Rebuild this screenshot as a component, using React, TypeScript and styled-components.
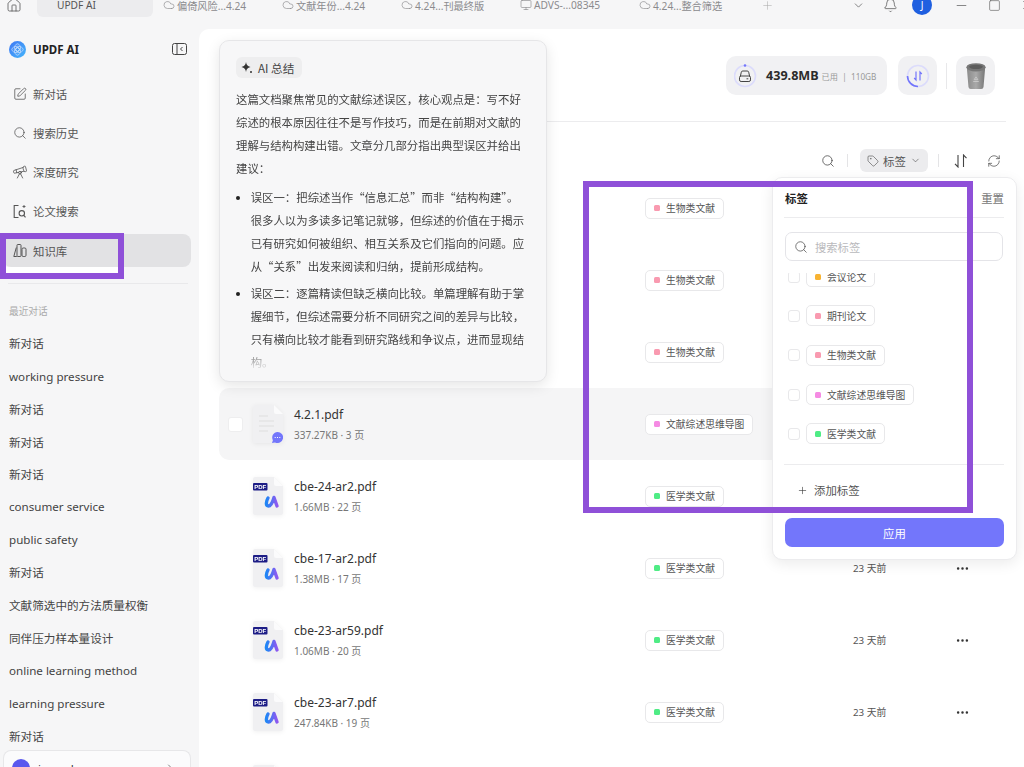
import React from 'react';
import styled, {createGlobalStyle} from 'styled-components';
import {Bell, ChevronDown, ChevronRight, Cloud, House, Minus, Monitor, MoreHorizontal, Plus, RefreshCw, Search, Square, SquarePen, Tag, Telescope, X} from 'lucide-react';

const GlobalStyle = createGlobalStyle`
  html, body {
    margin: 0;
    height: 100%;
    overflow: hidden;
    background: #f6f6f7;
  }
  body {
    font-family: "Noto Sans", "Noto Sans CJK SC", sans-serif;
    color: #333;
  }
  * { box-sizing: border-box; }
`

const Page = styled.div`
  position: relative;
  width: 1024px;
  height: 767px;
  overflow: hidden;
  display: flex;
  flex-direction: column;
`

/* top tab strip, cut off by the top of the screenshot */
const TabBar = styled.div`
  flex: 0 0 29px;
  display: flex;
  align-items: flex-start;
  overflow: hidden;
  color: #555;
`
const HomeCell = styled.div`
  flex: 0 0 37px;
  height: 10px;
  padding-left: 6px;
  display: flex;
  align-items: center;
`
const TabItem = styled.div<{$active?: boolean}>`
  flex: 0 0 ${p => p.$active ? '116px' : '119px'};
  height: 17px;
  padding: 0 0 7px ${p => p.$active ? '20px' : '10px'};
  display: flex;
  align-items: center;
  gap: 2px;
  font-size: 10.2px;
  color: ${p => p.$active ? '#555' : '#8b8b8e'};
  background: ${p => p.$active ? '#ececee' : 'transparent'};
  border-radius: 0 0 6px 6px;
  white-space: nowrap;
`
const TabPlus = styled.div`
  margin-left: 13px;
  height: 10px;
  display: flex;
  align-items: center;
  color: #aaa;
`
const WindowTools = styled.div`
  margin-left: auto;
  margin-right: -19px;
  display: flex;
  height: 10px;
`
const WindowCell = styled.div<{$gap?: number}>`
  width: 32px;
  margin-left: ${p => p.$gap || 0}px;
  display: flex;
  align-items: center;
  justify-content: center;
`
const AccountBadge = styled.div`
  flex: 0 0 20px;
  height: 20px;
  border-radius: 50%;
  background: #1f5fe0;
  color: #fff;
  font-size: 10px;
  display: flex;
  align-items: center;
  justify-content: center;
`

const Body = styled.div`
  flex: 1;
  min-height: 0;
  display: flex;
`

const Sidebar = styled.aside`
  flex: 0 0 199px;
  display: flex;
  flex-direction: column;
  overflow: hidden;
`
const Brand = styled.div`
  flex: 0 0 40px;
  padding: 0 12px 0 9px;
  display: flex;
  align-items: center;
  gap: 7px;
  font-size: 11.5px;
  font-weight: 700;
  color: #222;
  > span { margin-right: auto; }
`
const Nav = styled.nav`
  margin-top: 8px;
  padding: 0 8px 0 3px;
  display: flex;
  flex-direction: column;
  gap: 6.25px;
`
const NavItem = styled.div<{$active?: boolean}>`
  height: 33px;
  padding-left: 10px;
  display: flex;
  align-items: center;
  gap: 6px;
  font-size: 11.4px;
  color: #555;
  border-radius: 8px;
  background: ${p => p.$active ? '#e2e2e4' : 'transparent'};
`
const NavIcon = styled.span`
  flex: 0 0 14px;
  width: 14px;
  display: flex;
  justify-content: center;
  color: #444;
  > svg { flex-shrink: 0; }
`
const WideNavIcon = styled(NavIcon)`
  > svg { margin: 0 -1px; }
`
const SideRule = styled.div`
  flex: 0 0 1px;
  margin: 16px 11px 0 8px;
  background: #e9e9eb;
`
const RecentLabel = styled.div`
  flex: 0 0 43px;
  padding: 20px 0 0 9px;
  font-size: 9.7px;
  line-height: 16px;
  color: #aaa;
`
const RecentList = styled.div`
  flex: 1;
  min-height: 0;
  overflow: hidden;
`
const RecentItem = styled.div`
  height: 32.72px;
  padding-left: 9px;
  display: flex;
  align-items: center;
  font-size: 11.6px;
  color: #444;
  white-space: nowrap;
`
const UserCard = styled.div`
  flex: 0 0 17px;
  margin: 0 8px 0 3px;
  padding: 8px 14px 0 8px;
  display: flex;
  align-items: flex-start;
  gap: 8px;
  overflow: hidden;
  font-size: 11.4px;
  line-height: 14px;
  color: #333;
  background: #fbfbfc;
  border: 1px solid #e7e7e9;
  border-bottom: none;
  border-radius: 8px 8px 0 0;
  > span { margin: 3px auto 0 0; }
  > svg { margin-top: 3px; }
`
const UserAvatar = styled.div`
  flex: 0 0 18px;
  height: 18px;
  border-radius: 50%;
  background: #5a58ee;
`

const Main = styled.main`
  position: relative;
  flex: 1;
  min-width: 0;
  background: #fff;
  border-radius: 10px 0 0 0;
  overflow: hidden;
`
const StorageRow = styled.div`
  padding: 27px 29px 0 0;
  display: flex;
  justify-content: flex-end;
  align-items: center;
`
const StoragePill = styled.div`
  width: 161px;
  height: 39px;
  margin-right: 11px;
  padding-left: 8px;
  display: flex;
  align-items: center;
  border-radius: 10px;
  background: #f1f1f3;
`
const StorageValue = styled.b`
  margin-left: 8px;
  font-size: 12.6px;
  color: #2b2b2b;
`
const StorageNote = styled.span`
  margin-left: 3px;
  font-size: 8.2px;
  color: #999;
  white-space: nowrap;
`
const SquareButton = styled.div`
  flex: 0 0 39px;
  height: 39px;
  border-radius: 10px;
  background: #f1f1f3;
  display: flex;
  align-items: center;
  justify-content: center;
`
const StorageSep = styled.div`
  flex: 0 0 1px;
  height: 26px;
  margin: 0 9px;
  background: #e8e8ea;
`
const MainRule = styled.div`
  height: 1px;
  margin: 26px 18px 0 20px;
  background: #ececee;
`
const Toolbar = styled.div`
  margin-top: 27px;
  height: 23px;
  padding-right: 23px;
  display: flex;
  justify-content: flex-end;
  align-items: center;
  color: #444;
`
const ToolSep = styled.div<{$left: number; $right: number}>`
  flex: 0 0 1px;
  height: 13px;
  margin: 0 ${p => p.$right}px 0 ${p => p.$left}px;
  background: #e4e4e6;
`
const TagFilter = styled.div`
  width: 68px;
  height: 23px;
  padding-left: 7px;
  display: flex;
  align-items: center;
  gap: 4px;
  font-size: 11.4px;
  color: #555;
  border-radius: 6px;
  background: #ececee;
`
const RefreshTool = styled.div`
  margin-left: 19px;
  display: flex;
`

const FileList = styled.div`
  margin: 0 18px 0 20px;
`
const FileRow = styled.div<{$active?: boolean}>`
  height: 72px;
  display: grid;
  grid-template-columns: 426px 208px 99px 20px;
  align-items: center;
  border-radius: 10px;
  background: ${p => p.$active ? '#f5f5f6' : 'transparent'};
`
const FileCell = styled.div`
  padding-left: 9px;
  display: flex;
  align-items: center;
`
const RowCheck = styled.div<{$shown?: boolean}>`
  flex: 0 0 15px;
  height: 15px;
  margin-right: 10px;
  border-radius: 3px;
  background: #fff;
  border: 1px solid #eeeeef;
  visibility: ${p => p.$shown ? 'visible' : 'hidden'};
`
const FileGlyph = styled.svg`
  flex: 0 0 30px;
  filter: drop-shadow(0 1px 2px rgba(0, 0, 0, .06));
`
const FileText = styled.div`
  margin-left: 11px;
`
const FileName = styled.div`
  font-size: 12px;
  line-height: 16px;
  color: #333;
`
const FileMeta = styled.div`
  margin-top: 5px;
  font-size: 10px;
  line-height: 14px;
  color: #777;
`
const TagChip = styled.div`
  justify-self: start;
  height: 21px;
  padding: 0 8px;
  display: inline-flex;
  align-items: center;
  gap: 6px;
  font-size: 9.8px;
  color: #555;
  background: #fff;
  border: 1px solid #e8e8ea;
  border-radius: 5px;
  white-space: nowrap;
`
const TagDot = styled.i<{$color: string}>`
  width: 6px;
  height: 6px;
  border-radius: 1.5px;
  background: ${p => p.$color};
`
const RowDate = styled.div`
  font-size: 9.8px;
  color: #555;
`
const RowMore = styled.div`
  display: flex;
  justify-content: center;
  color: #333;
`

/* hover card with the AI summary */
const SummaryCard = styled.div`
  position: absolute;
  left: 20px;
  top: 11px;
  width: 328px;
  height: 342px;
  padding: 16px 20px 0 16px;
  overflow: hidden;
  background: #f7f7f8;
  border: 1px solid #e6e6e8;
  border-radius: 10px;
  box-shadow: 0 4px 14px rgba(0, 0, 0, .1);
  font-family: "Noto Sans CJK SC", "Noto Sans", sans-serif;
`
const SummaryChip = styled.div`
  width: 66px;
  height: 21px;
  padding-left: 5px;
  display: flex;
  align-items: center;
  gap: 5px;
  font-size: 11.6px;
  color: #444;
  background: #eeeeef;
  border-radius: 6px;
`
const SummaryText = styled.div`
  height: 292px;
  margin-top: 10px;
  font-size: 11.4px;
  line-height: 23px;
  color: #444;
  -webkit-mask-image: linear-gradient(#000 258px, transparent 284px);
  mask-image: linear-gradient(#000 258px, transparent 284px);
  > p { margin: 0; }
  > ul { margin: 6px 0 0; padding-left: 14.7px; }
  li + li { margin-top: 4px; }
  li::marker { font-size: 11px; color: #222; }
`

/* tag filter popover */
const Popover = styled.div`
  position: absolute;
  left: 573px;
  top: 148px;
  width: 245px;
  height: 383px;
  padding: 0 12px 0 11px;
  background: #fff;
  border: 1px solid #ececee;
  border-radius: 10px;
  box-shadow: 0 4px 14px rgba(0, 0, 0, .08);
`
const PopHeader = styled.div`
  height: 40px;
  padding-left: 1px;
  display: flex;
  align-items: center;
  justify-content: space-between;
  font-size: 11.4px;
  color: #777;
  border-bottom: 1px solid #ececee;
  > b { color: #222; font-weight: 700; }
`
const PopSearch = styled.div`
  height: 29px;
  margin: 14px 1px 0;
  padding-left: 8px;
  display: flex;
  align-items: center;
  gap: 7px;
  font-size: 11.3px;
  color: #b9b9bc;
  border: 1px solid #e4e4e8;
  border-radius: 7px;
  > svg { color: #444; }
`
const PopList = styled.div`
  height: 192px;
  margin-top: 12px;
  overflow: hidden;
  border-bottom: 1px solid #ececee;
`
const PopScroller = styled.div`
  margin-top: -16px;
  padding-left: 4px;
`
const PopOption = styled.div`
  height: 39.3px;
  display: flex;
  align-items: center;
  gap: 6px;
`
const PopCheck = styled.div`
  flex: 0 0 12px;
  height: 12px;
  border: 1px solid #e8e8ea;
  border-radius: 3px;
  background: #fff;
`
const AddTag = styled.div`
  height: 50px;
  padding-left: 13px;
  display: flex;
  align-items: center;
  gap: 6px;
  font-size: 11.4px;
  color: #555;
  > svg { color: #333; }
`
const ApplyButton = styled.div`
  height: 29px;
  margin: 3px 0 0 1px;
  display: flex;
  align-items: center;
  justify-content: center;
  font-size: 11.4px;
  color: #fff;
  background: #7376fb;
  border-radius: 7px;
`

/* purple marks drawn over the screenshot */
const KnowledgeMark = styled.div`
  position: absolute;
  left: 0;
  top: 233px;
  width: 124px;
  height: 46px;
  border: 6px solid #8f50d8;
  background: linear-gradient(transparent 28px, #fff 28px);
`
const TagMark = styled.div`
  position: absolute;
  left: 583px;
  top: 181px;
  width: 390px;
  height: 332px;
  border: 6px solid #8f50d8;
`

const PINK = '#f99ab0'
const GREEN = '#4fec85'
const MAGENTA = '#f58be3'
const AMBER = '#f8b332'

const recent = ['新对话', 'working pressure', '新对话', '新对话', '新对话', 'consumer service', 'public safety', '新对话', '文献筛选中的方法质量权衡', '同伴压力样本量设计', 'online learning method', 'learning pressure', '新对话']

const tabs = [
  {name: '偏倚风险...4.24', Icon: Cloud},
  {name: '文献年份...4.24', Icon: Cloud},
  {name: '4.24...刊最终版', Icon: Cloud},
  {name: 'ADVS-...08345', Icon: Monitor},
  {name: '4.24...整合筛选', Icon: Cloud},
]

type FileItem = {name?: string; meta?: string; tag: string; color: string; date?: string; plain?: boolean}

const files: FileItem[] = [
  {tag: '生物类文献', color: PINK},
  {tag: '生物类文献', color: PINK},
  {tag: '生物类文献', color: PINK},
  {name: '4.2.1.pdf', meta: '337.27KB · 3 页', tag: '文献综述思维导图', color: MAGENTA, plain: true},
  {name: 'cbe-24-ar2.pdf', meta: '1.66MB · 22 页', tag: '医学类文献', color: GREEN},
  {name: 'cbe-17-ar2.pdf', meta: '1.38MB · 17 页', tag: '医学类文献', color: GREEN, date: '23 天前'},
  {name: 'cbe-23-ar59.pdf', meta: '1.06MB · 20 页', tag: '医学类文献', color: GREEN, date: '23 天前'},
  {name: 'cbe-23-ar7.pdf', meta: '247.84KB · 19 页', tag: '医学类文献', color: GREEN, date: '23 天前'},
  {name: 'cbe-23-ar6.pdf', meta: '1.12MB · 12 页', tag: '医学类文献', color: GREEN, date: '23 天前'},
]

const popTags = [
  {tag: '会议论文', color: AMBER},
  {tag: '期刊论文', color: PINK},
  {tag: '生物类文献', color: PINK},
  {tag: '文献综述思维导图', color: MAGENTA},
  {tag: '医学类文献', color: GREEN},
]

const UpdfLogo = () => (
  <svg width="17" height="17" viewBox="0 0 18 18">
    <defs>
      <linearGradient id="logoFill" x1="0" y1="0" x2="1" y2="1">
        <stop offset="0" stopColor="#3f78f4"/>
        <stop offset="1" stopColor="#45b6fb"/>
      </linearGradient>
    </defs>
    <circle cx="9" cy="9" r="9" fill="url(#logoFill)"/>
    <circle cx="9" cy="9" r="2" fill="none" stroke="#fff" strokeWidth="1"/>
    <ellipse cx="9" cy="9" rx="6" ry="3.4" fill="none" stroke="#dfe9ff" strokeWidth=".7"/>
    <ellipse cx="9" cy="9" rx="3.4" ry="6" fill="none" stroke="#dfe9ff" strokeWidth=".7"/>
  </svg>
)

const PanelToggle = () => (
  <svg width="15" height="12" viewBox="0 0 15 12" fill="none" stroke="#444" strokeWidth="1">
    <rect x=".5" y=".5" width="14" height="11" rx="2"/>
    <path d="M5 .5v11M10.500 4 8.500 6l2 2"/>
  </svg>
)

const PaperSearchIcon = () => (
  <svg width="14" height="15" viewBox="0 0 14 15" fill="none" stroke="#555" strokeWidth="1.1">
    <path d="M5.500 1.500H1.200v12h4.300"/>
    <circle cx="8.800" cy="9.300" r="2.700"/>
    <path d="m10.800 11.400 1.700 2"/>
    <path d="M11 1v3M9.500 2.500h3" strokeWidth=".9"/>
  </svg>
)

const BooksIcon = () => (
  <svg width="14" height="15" viewBox="0 0 14 15" fill="none" stroke="#555" strokeWidth="1">
    <path d="M3.300 4.500 .8 13.500h3"/>
    <rect x="4" y="1.500" width="4" height="12" rx=".8"/>
    <rect x="9" y="5" width="4" height="8.500" rx="1.200"/>
  </svg>
)

const SparkIcon = () => (
  <svg width="12" height="12" viewBox="0 0 12 12" fill="#333">
    <path d="M5 0c.5 3 1.500 4.200 4.500 5C6.500 5.800 5.500 7 5 10 4.500 7 3.500 5.800.5 5 3.500 4.200 4.500 3 5 0z"/>
    <circle cx="10" cy="10" r="1"/>
  </svg>
)

const SortIcon = () => (
  <svg width="14" height="14" viewBox="0 0 14 14" fill="none" stroke="#444" strokeWidth="1.1">
    <path d="M4 1v12L1 9.800M9.500 13V1l3 3.200"/>
  </svg>
)

const DiskIcon = () => (
  <svg width="24" height="26" viewBox="0 0 24 26" fill="none">
    <circle cx="11" cy="13" r="10.500" stroke="#dcdcfb" strokeWidth="1.600"/>
    <circle cx="11" cy="2.500" r="1.300" fill="#7376fb"/>
    <path d="M6.300 13.500 7.300 9.200A1.500 1.500 0 0 1 8.800 8h4.400a1.500 1.500 0 0 1 1.500 1.200l1 4.300" stroke="#444" strokeWidth="1"/>
    <rect x="5.500" y="13" width="11" height="5.500" rx="1.600" stroke="#444" strokeWidth="1"/>
    <path d="M12.500 15.800h1.800" stroke="#444"/>
  </svg>
)

const SyncIcon = () => (
  <svg width="24" height="24" viewBox="0 0 24 24" fill="none">
    <circle cx="12" cy="12" r="10.500" stroke="#dcdcfb" strokeWidth="1.600"/>
    <path d="M12 22.500A10.500 10.500 0 0 1 1.500 12" stroke="#7376fb" strokeWidth="1.600"/>
    <path d="M10 7.500v8.500l-1.800-2M14 16.500V8l1.800 2" stroke="#7376fb" strokeWidth="1.200"/>
  </svg>
)

const TrashIcon = () => (
  <svg width="22" height="30" viewBox="0 0 24 30">
    <defs>
      <linearGradient id="binFill" x1="0" y1="0" x2="1" y2="0">
        <stop offset="0" stopColor="#8a8a8a"/>
        <stop offset=".5" stopColor="#a9a9a9"/>
        <stop offset="1" stopColor="#777"/>
      </linearGradient>
    </defs>
    <path d="M2 6h20l-1.800 21a2.500 2.500 0 0 1-2.500 2.200H6.300A2.500 2.500 0 0 1 3.800 27z" fill="url(#binFill)"/>
    <ellipse cx="12" cy="5.500" rx="10.500" ry="4.500" fill="#777"/>
    <ellipse cx="12" cy="5" rx="7.500" ry="2.400" fill="#5c5c5c"/>
    <path d="m12 16 2 3h-4zM9 21h6" stroke="#c9c9c9" strokeWidth="1" fill="none"/>
  </svg>
)

const PageSheet = () => (
  <>
    <path d="M2 0h19l9 9v27a2 2 0 0 1-2 2H2a2 2 0 0 1-2-2V2a2 2 0 0 1 2-2z" fill="#f0f0f2"/>
    <path d="M21 0l9 9h-7a2 2 0 0 1-2-2z" fill="#fbfbfc"/>
  </>
)

const PdfIcon = ({id}: {id: string}) => (
  <FileGlyph width="30" height="38" viewBox="0 0 30 38">
    <defs>
      <linearGradient id={id} x1="0" y1="0" x2="1" y2="0">
        <stop offset="0" stopColor="#1f86f5"/>
        <stop offset="1" stopColor="#8f58f0"/>
      </linearGradient>
    </defs>
    <PageSheet/>
    <rect x="0" y="6" width="14.500" height="7.500" rx="1" fill="#1d1d86"/>
    <text x="7.200" y="12" textAnchor="middle" fontSize="6" fontWeight="700" fill="#fff" fontFamily="Liberation Sans, sans-serif">PDF</text>
    <path d="M15 21c-2 3.500-2.500 8 .5 8 3 0 4.500-5 5.500-8.500l3 8.500" fill="none" stroke={`url(#${id})`} strokeWidth="3.400" strokeLinecap="round" strokeLinejoin="round"/>
  </FileGlyph>
)

const ChatFileIcon = () => (
  <FileGlyph width="30" height="38" viewBox="0 0 30 38">
    <PageSheet/>
    <path d="M6 11h9M6 16h15M6 21h15M6 26h9" stroke="#e3e3e5" strokeWidth="1.300"/>
    <path d="M24.500 27a5.500 5.500 0 1 1-2.400 10.400L19 38l.9-2.800A5.500 5.500 0 0 1 24.500 27z" fill="#7376fb"/>
    <path d="M21.700 32.500h1M24 32.500h1M26.300 32.500h1" stroke="#fff" strokeWidth="1.200"/>
  </FileGlyph>
)

function App() {
  return (
    <Page>
      <GlobalStyle/>
      <TabBar>
        <HomeCell><House size={16} strokeWidth={1.2}/></HomeCell>
        <TabItem $active>UPDF AI</TabItem>
        {tabs.map(t => (
          <TabItem key={t.name}><t.Icon size={12} strokeWidth={1.3}/>{t.name}</TabItem>
        ))}
        <TabPlus><Plus size={13} strokeWidth={1}/></TabPlus>
        <WindowTools>
          <WindowCell><ChevronDown size={13} strokeWidth={1.3}/></WindowCell>
          <WindowCell><Bell size={15} strokeWidth={1.2}/></WindowCell>
          <WindowCell><AccountBadge>J</AccountBadge></WindowCell>
          <WindowCell $gap={7}><Minus size={15} strokeWidth={1.1}/></WindowCell>
          <WindowCell $gap={1}><Square size={13} strokeWidth={1.1}/></WindowCell>
          <WindowCell $gap={1}><X size={14} strokeWidth={1.1}/></WindowCell>
        </WindowTools>
      </TabBar>
      <Body>
        <Sidebar>
          <Brand><UpdfLogo/><span>UPDF AI</span><PanelToggle/></Brand>
          <Nav>
            <NavItem><NavIcon><SquarePen size={14} strokeWidth={1.2}/></NavIcon>新对话</NavItem>
            <NavItem><NavIcon><Search size={14} strokeWidth={1.2}/></NavIcon>搜索历史</NavItem>
            <NavItem><WideNavIcon><Telescope size={16} strokeWidth={1.1}/></WideNavIcon>深度研究</NavItem>
            <NavItem><NavIcon><PaperSearchIcon/></NavIcon>论文搜索</NavItem>
            <NavItem $active><NavIcon><BooksIcon/></NavIcon>知识库</NavItem>
          </Nav>
          <SideRule/>
          <RecentLabel>最近对话</RecentLabel>
          <RecentList>
            {recent.map((r, i) => <RecentItem key={i}>{r}</RecentItem>)}
          </RecentList>
          <UserCard>
            <UserAvatar/>
            <span>jasond</span>
            <ChevronRight size={12} strokeWidth={1.2}/>
          </UserCard>
        </Sidebar>
        <Main>
          <StorageRow>
            <StoragePill>
              <DiskIcon/>
              <StorageValue>439.8MB</StorageValue>
              <StorageNote>已用 &nbsp;|&nbsp; 110GB</StorageNote>
            </StoragePill>
            <SquareButton><SyncIcon/></SquareButton>
            <StorageSep/>
            <SquareButton><TrashIcon/></SquareButton>
          </StorageRow>
          <MainRule/>
          <Toolbar>
            <Search size={14} strokeWidth={1.3}/>
            <ToolSep $left={12} $right={12}/>
            <TagFilter>
              <Tag size={12} strokeWidth={1.3}/>标签<ChevronDown size={11} strokeWidth={1.4}/>
            </TagFilter>
            <ToolSep $left={10} $right={15}/>
            <SortIcon/>
            <RefreshTool><RefreshCw size={14} strokeWidth={1.2}/></RefreshTool>
          </Toolbar>
          <FileList>
            {files.map((f, i) => (
              <FileRow key={i} $active={f.plain}>
                <FileCell>
                  <RowCheck $shown={f.plain}/>
                  {f.plain ? <ChatFileIcon/> : f.name ? <PdfIcon id={`mark${i}`}/> : null}
                  <FileText>
                    <FileName>{f.name}</FileName>
                    <FileMeta>{f.meta}</FileMeta>
                  </FileText>
                </FileCell>
                <TagChip><TagDot $color={f.color}/>{f.tag}</TagChip>
                <RowDate>{f.date}</RowDate>
                {f.date ? <RowMore><MoreHorizontal size={15} strokeWidth={2}/></RowMore> : null}
              </FileRow>
            ))}
          </FileList>
          <SummaryCard>
            <SummaryChip><SparkIcon/>AI 总结</SummaryChip>
            <SummaryText>
              <p>这篇文档聚焦常见的文献综述误区，核心观点是：写不好综述的根本原因往往不是写作技巧，而是在前期对文献的理解与结构构建出错。文章分几部分指出典型误区并给出建议：</p>
              <ul>
                <li>误区一：把综述当作“信息汇总”而非“结构构建”。很多人以为多读多记笔记就够，但综述的价值在于揭示已有研究如何被组织、相互关系及它们指向的问题。应从“关系”出发来阅读和归纳，提前形成结构。</li>
                <li>误区二：逐篇精读但缺乏横向比较。单篇理解有助于掌握细节，但综述需要分析不同研究之间的差异与比较，只有横向比较才能看到研究路线和争议点，进而显现结构。</li>
              </ul>
            </SummaryText>
          </SummaryCard>
          <Popover>
            <PopHeader><b>标签</b>重置</PopHeader>
            <PopSearch><Search size={14} strokeWidth={1.2}/>搜索标签</PopSearch>
            <PopList>
              <PopScroller>
                {popTags.map(t => (
                  <PopOption key={t.tag}>
                    <PopCheck/>
                    <TagChip><TagDot $color={t.color}/>{t.tag}</TagChip>
                  </PopOption>
                ))}
              </PopScroller>
            </PopList>
            <AddTag><Plus size={11} strokeWidth={1.3}/>添加标签</AddTag>
            <ApplyButton>应用</ApplyButton>
          </Popover>
        </Main>
      </Body>
      <KnowledgeMark/>
      <TagMark/>
    </Page>
  );
}

export default App
